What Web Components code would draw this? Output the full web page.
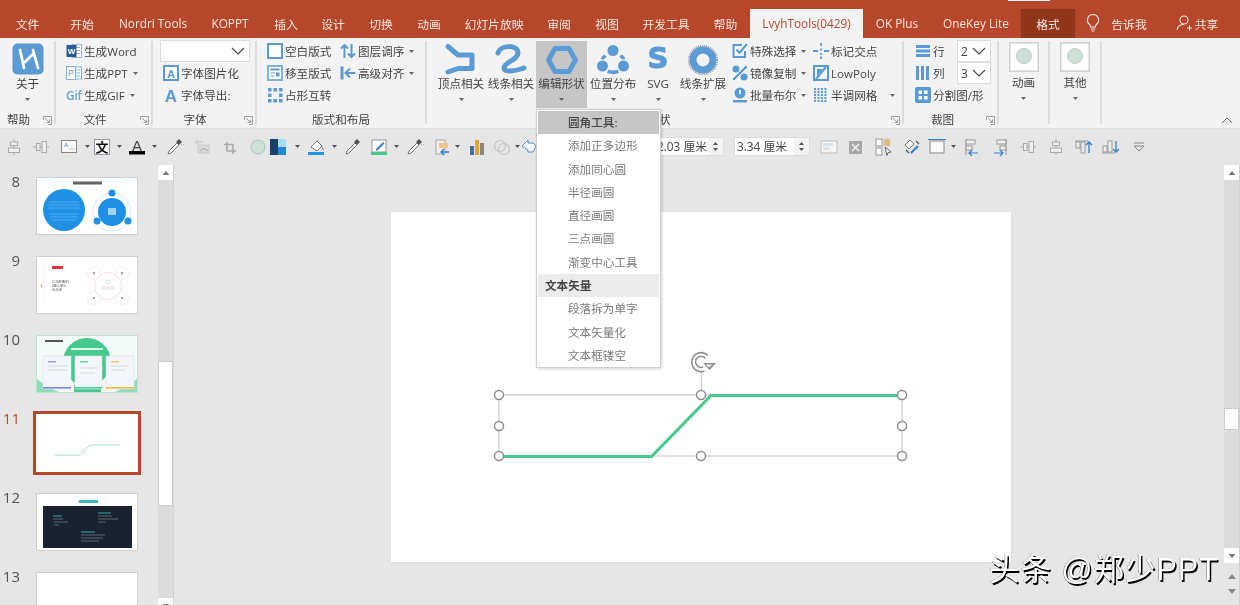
<!DOCTYPE html>
<html lang="zh"><head><meta charset="utf-8"><title>PPT</title>
<style>
html,body{margin:0;padding:0;background:#e6e6e6;overflow:hidden}
body{width:1240px;height:605px;font:11.6px "Open Sans","Noto Sans CJK SC",sans-serif;color:#444}
svg{display:block;overflow:visible}
ppt-thumb svg{overflow:hidden;filter:blur(.35px)}
</style></head><body>
<ppt-app>
<ppt-tabs>
<ppt-tab w="55">文件</ppt-tab><ppt-tab w="54">开始</ppt-tab><ppt-tab w="88">Nordri Tools</ppt-tab><ppt-tab w="66">KOPPT</ppt-tab><ppt-tab w="46">插入</ppt-tab><ppt-tab w="48">设计</ppt-tab><ppt-tab w="48">切换</ppt-tab><ppt-tab w="48">动画</ppt-tab><ppt-tab w="82">幻灯片放映</ppt-tab><ppt-tab w="48">审阅</ppt-tab><ppt-tab w="48">视图</ppt-tab><ppt-tab w="70">开发工具</ppt-tab><ppt-tab w="49">帮助</ppt-tab><ppt-tab w="113" state="active">LvyhTools(0429)</ppt-tab><ppt-tab w="68">OK Plus</ppt-tab><ppt-tab w="90">OneKey Lite</ppt-tab><ppt-tab w="54" state="dark">格式</ppt-tab>
<ppt-tab w="35"><svg width="16" height="20" viewBox="0 0 16 20" fill="none" stroke="#f7e6e1" stroke-width="1.2"><path d="M8 1.5a5.6 5.6 0 0 0-3.4 10c.8.7 1 1.500 1 2.500h4.800c0-1 .2-1.800 1-2.500A5.600 5.600 0 0 0 8 1.500zM5.800 16h4.400M6.500 18h3"/></svg></ppt-tab>
<ppt-tab w="38">告诉我</ppt-tab><ppt-tab w="24"></ppt-tab>
<ppt-tab w="50"><svg width="16" height="18" viewBox="0 0 16 18" fill="none" stroke="#f7e6e1" stroke-width="1.100" style="margin-right:3px"><circle cx="8" cy="6" r="4"/><path d="M1 16c.5-3.500 3-5.500 7-5.500M11 14h5M13.500 11.500v5"/></svg>共享</ppt-tab>
</ppt-tabs>

<ppt-ribbon>
<ppt-group w="56" lp="17" label="帮助" launch>
 <ppt-big w="55" label="关于"><svg width="32" height="32" viewBox="0 0 32 32" style="margin-top:-1px"><rect x="0.500" y="0.500" width="31" height="31" rx="5" fill="#5b9bd5"/><path d="M8 7l4 18M13 19l7-7M21 7l5 18" fill="none" stroke="#fff" stroke-width="2.800" stroke-linecap="round" stroke-linejoin="round"/></svg></ppt-big>
</ppt-group>
<ppt-group w="97" lp="17" label="文件" launch pad="10">
 <ppt-col>
 <ppt-row><svg slot="icon" width="16" height="16" viewBox="0 0 16 16"><rect x="6" y="1.500" width="9.500" height="13" fill="#fff" stroke="#9db3d8"/><path d="M9 4.500h5M9 7.500h5M9 10.500h5" stroke="#9db3d8"/><rect x="0.500" y="2" width="10" height="12" fill="#2b579a"/><text x="5.500" y="11" font-size="8" font-weight="700" text-anchor="middle" fill="#fff" font-family="Liberation Sans">W</text></svg>生成Word</ppt-row>
 <ppt-row arrow><svg slot="icon" width="16" height="16" viewBox="0 0 16 16" fill="none" stroke="#7fb3e0"><rect x="7" y="2" width="8.500" height="12" fill="#fff"/><path d="M10 5h4M10 8h4M10 11h4"/><rect x="0.500" y="1.500" width="9" height="13" fill="#fff"/><text x="5" y="11" font-size="8.500" fill="#5b9bd5" stroke="none" text-anchor="middle" font-family="Liberation Sans">P</text></svg>生成PPT</ppt-row>
 <ppt-row arrow><span slot="icon" style="color:#6aa5da;font-size:12px;font-weight:600;letter-spacing:-.3px;margin-left:0">Gif</span>生成GIF</ppt-row>
 </ppt-col>
</ppt-group>
<ppt-group w="104" lp="18" label="字体" launch pad="7">
 <ppt-col>
 <ppt-combo w="90"></ppt-combo>
 <ppt-row style="margin-left:3px"><svg slot="icon" width="16" height="16" viewBox="0 0 16 16"><rect x="1" y="1" width="14" height="14" fill="#fff" stroke="#5b9bd5" stroke-width="2"/><text x="8" y="12.500" font-size="11" font-weight="700" text-anchor="middle" fill="#5b9bd5" font-family="Liberation Sans">A</text></svg>字体图片化</ppt-row>
 <ppt-row style="margin-left:3px"><svg slot="icon" width="16" height="16" viewBox="0 0 16 16"><text x="8" y="14.500" font-size="17" font-weight="700" text-anchor="middle" fill="#5b9bd5" font-family="Liberation Sans">A</text></svg>字体导出:</ppt-row>
 </ppt-col>
</ppt-group>
<ppt-group w="170" label="版式和布局" pad="10">
 <ppt-col style="width:73px">
 <ppt-row><svg slot="icon" width="16" height="16" viewBox="0 0 16 16"><rect x="1" y="1" width="14" height="14" fill="#fff" stroke="#5b9bd5" stroke-width="2"/></svg>空白版式</ppt-row>
 <ppt-row><svg slot="icon" width="16" height="16" viewBox="0 0 16 16"><rect x="1" y="1" width="14" height="14" fill="#fff" stroke="#7fb3e0" stroke-width="2"/><path d="M3.500 4.500h9" stroke="#5b9bd5" stroke-width="2"/><path d="M3.500 8h4M3.500 11h4" stroke="#5b9bd5"/><rect x="9" y="7.500" width="3.500" height="4" fill="#5b9bd5"/></svg>移至版式</ppt-row>
 <ppt-row><svg slot="icon" width="16" height="16" viewBox="0 0 16 16" fill="#5b9bd5"><rect x="1" y="1" width="3.500" height="3.500"/><rect x="6.500" y="1" width="3.500" height="3.500"/><rect x="12" y="1" width="3.500" height="3.500"/><rect x="1" y="6.500" width="3.500" height="3.500"/><rect x="12" y="6.500" width="3.500" height="3.500"/><rect x="1" y="12" width="3.500" height="3.500"/><rect x="6.500" y="12" width="3.500" height="3.500"/><rect x="12" y="12" width="3.500" height="3.500"/></svg>占形互转</ppt-row>
 </ppt-col>
 <ppt-col>
 <ppt-row arrow><svg slot="icon" width="16" height="16" viewBox="0 0 16 16" fill="none" stroke="#5b9bd5" stroke-width="2"><path d="M4.500 15V2M1 5.500l3.500-3.500L8 5.500M11.500 1v13M8 10.500l3.500 3.500 3.500-3.500"/></svg>图层调序</ppt-row>
 <ppt-row arrow><svg slot="icon" width="16" height="16" viewBox="0 0 16 16" fill="none" stroke="#5b9bd5" stroke-width="2"><path d="M2 1.500v13" stroke-width="3"/><path d="M15.500 8H6M10 3.500L5.500 8l4.500 4.500"/></svg>高级对齐</ppt-row>
 </ppt-col>
</ppt-group>
<ppt-group w="477" lp="11" label="形状" launch pad="9">
 <ppt-big w="50" label="顶点相关"><svg width="32" height="32" viewBox="0 0 32 32" fill="none" stroke="#5b9bd5" stroke-width="5" stroke-linecap="round" stroke-linejoin="round"><path d="M3 2.500l10 8.500h14v13.500H13L3 28"/></svg></ppt-big>
 <ppt-big w="50" label="线条相关"><svg width="32" height="32" viewBox="0 0 32 32" fill="none" stroke="#5b9bd5" stroke-width="5" stroke-linecap="round"><path d="M3 9C5 1 23 0 23 9 23 16 9 18 9 24 9 29 21 27 29 24"/></svg></ppt-big>
 <ppt-big w="51" label="编辑形状" on style="margin-left:0"><svg width="32" height="32" viewBox="0 0 32 32" fill="none" stroke="#5b9bd5" stroke-width="5" stroke-linejoin="round"><path d="M2.500 16L9 4.500h14L29.500 16 23 27.500H9z"/></svg></ppt-big>
 <ppt-big w="52" label="位置分布"><svg width="32" height="32" viewBox="0 0 32 32" fill="#5b9bd5"><circle cx="16" cy="6.500" r="5.500"/><circle cx="5.500" cy="22" r="5.500"/><circle cx="26.500" cy="22" r="5.500"/><path d="M7 10.500A14 14 0 0 0 3.500 15l3.500.6c.7-1 1.600-2 2.800-2.800zM25 10.500a14 14 0 0 1 3.500 4.500l-3.500.6c-.7-1-1.600-2-2.800-2.800zM10 29c3.800 1.500 8.200 1.500 12 0l-1.200-3.300c-2.800 1-6.800 1-9.600 0z"/></svg></ppt-big>
 <ppt-big w="38" label="SVG"><svg width="32" height="32" viewBox="0 0 32 32"><text x="16" y="24" font-size="29" font-weight="700" fill="#5b9bd5" text-anchor="middle" font-family="DejaVu Sans" stroke="#5b9bd5" stroke-width="1">S</text></svg></ppt-big>
 <ppt-big w="52" label="线条扩展"><svg width="32" height="32" viewBox="0 0 32 32" fill="none"><circle cx="16" cy="16" r="14.300" stroke="#8a8a8a" stroke-width="1.500" stroke-dasharray="1 1"/><circle cx="16" cy="16" r="10" stroke="#5b9bd5" stroke-width="7"/></svg></ppt-big>
 <ppt-col style="width:81px;margin-left:3px">
 <ppt-row arrow><svg slot="icon" width="16" height="16" viewBox="0 0 16 16" fill="none" stroke="#5b9bd5" stroke-width="2"><path d="M13 8v6H1.500V2H10"/><path d="M4.500 6.500l3 3.500L15 1"/></svg>特殊选择</ppt-row>
 <ppt-row arrow><svg slot="icon" width="16" height="16" viewBox="0 0 16 16" fill="#5b9bd5"><circle cx="4" cy="4" r="3.500"/><circle cx="12" cy="12" r="3.500"/><path d="M14 1l1 1L2 15l-1-1z" stroke="#5b9bd5"/></svg>镜像复制</ppt-row>
 <ppt-row arrow><svg slot="icon" width="16" height="16" viewBox="0 0 16 16" fill="#5b9bd5"><circle cx="8" cy="6" r="5.500"/><rect x="7.200" y="3" width="1.600" height="4" fill="#fff"/><path d="M1 13h14v2.500H1z"/></svg>批量布尔</ppt-row>
 </ppt-col>
 <ppt-col style="width:82px">
 <ppt-row><svg slot="icon" width="16" height="16" viewBox="0 0 16 16" stroke="#5b9bd5" stroke-width="1.800"><path d="M8 0v3M8 5.500v2M8 10v2M8 13.500v2.500M0 8h5M11 8h5"/></svg>标记交点</ppt-row>
 <ppt-row><svg slot="icon" width="16" height="16" viewBox="0 0 16 16" fill="none" stroke="#5b9bd5" stroke-width="2"><rect x="1" y="1" width="14" height="14"/><path d="M4 4h6L4 11z" fill="#5b9bd5" stroke="none"/><path d="M13 2L3 14"/></svg>LowPoly</ppt-row>
 <ppt-row arrow="far"><svg slot="icon" width="16" height="16" viewBox="0 0 16 16" stroke="#5b9bd5" stroke-width="2" stroke-dasharray="2 1"><path d="M2 1v14M5.500 1v14M9 1v14M12.500 1v14"/></svg>半调网格</ppt-row>
 </ppt-col>
</ppt-group>
<ppt-group w="95" lp="16" label="裁图" launch pad="11">
 <ppt-col style="width:76px">
 <ppt-row><svg slot="icon" width="16" height="16" viewBox="0 0 16 16" fill="#5b9bd5"><rect x="1" y="2" width="14" height="3"/><rect x="1" y="6.500" width="14" height="3"/><rect x="1" y="11" width="14" height="3"/></svg>行<ppt-combo slot="end" w="34" value="2"></ppt-combo></ppt-row>
 <ppt-row><svg slot="icon" width="16" height="16" viewBox="0 0 16 16" fill="#5b9bd5"><rect x="1" y="1" width="3" height="14"/><rect x="6" y="1" width="3" height="14"/><rect x="11" y="1" width="3" height="14"/></svg>列<ppt-combo slot="end" w="34" value="3"></ppt-combo></ppt-row>
 <ppt-row><svg slot="icon" width="16" height="16" viewBox="0 0 16 16"><rect width="16" height="16" rx="2" fill="#5b9bd5"/><rect x="3.500" y="3.500" width="3.500" height="3.500" fill="#fff"/><rect x="9" y="3.500" width="3.500" height="3.500" fill="#fff"/><rect x="3.500" y="9" width="3.500" height="3.500" fill="#fff"/><rect x="9" y="9" width="3.500" height="3.500" fill="#fff"/></svg><span style="white-space:nowrap">分割图/形</span></ppt-row>
 </ppt-col>
</ppt-group>
<ppt-group w="51"><ppt-big w="49" label="动画" tight><svg width="30" height="30" viewBox="0 0 30 30"><rect x="0.750" y="0.750" width="28.500" height="28.500" fill="#fff" stroke="#cfcfcf" stroke-width="1.500"/><circle cx="15" cy="14" r="7.500" fill="#cfe0d8" stroke="#b9d2c6"/></svg></ppt-big></ppt-group>
<ppt-group w="52"><ppt-big w="50" label="其他" tight><svg width="30" height="30" viewBox="0 0 30 30"><rect x="0.750" y="0.750" width="28.500" height="28.500" fill="#fff" stroke="#cfcfcf" stroke-width="1.500"/><circle cx="15" cy="14" r="7.500" fill="#cfe0d8" stroke="#b9d2c6"/></svg></ppt-big></ppt-group>
</ppt-ribbon>

<ppt-toolbar></ppt-toolbar>

<ppt-workspace>
 <ppt-thumbs slot="thumbs">
 <ppt-thumb num="8"><svg width="100" height="56" viewBox="1 1 100 56"><path d="M1 3h12l3 2h21M67 5h21l3-2h10" fill="none" stroke="#cfe6f8" stroke-width=".6"/><rect x="37" y="4.500" width="29" height="3" fill="#666"/><circle cx="28" cy="33" r="21" fill="#1e90e6"/><path d="M13 25h30M12 28h32M12 31h32M13 37h30M14 40h28M16 43h24" stroke="#6db9f0" stroke-width=".7"/><circle cx="76" cy="35" r="19" fill="none" stroke="#cfe6f8"/><circle cx="76" cy="35" r="14" fill="#1e90e6"/><rect x="72" y="31" width="8" height="7" fill="#9fd0f5"/><circle cx="76" cy="16" r="3.500" fill="#1e90e6"/><circle cx="61" cy="44" r="3.500" fill="#1e90e6"/><circle cx="92" cy="44" r="3.500" fill="#1e90e6"/></svg></ppt-thumb>
 <ppt-thumb num="9"><svg width="100" height="56" viewBox="1 1 100 56"><rect x="16" y="10" width="11" height="3" fill="#f0303a"/><rect x="5" y="28" width="1" height="3" fill="#f2827f"/><path d="M8 2v50" stroke="#f2f2f2" stroke-width=".5"/><text x="16" y="27" font-size="3.500" fill="#555" font-family="Liberation Sans">COMPANY</text><text x="16" y="31" font-size="3.500" fill="#555" font-family="Liberation Sans">VALUES</text><text x="16" y="35" font-size="3.500" fill="#555" font-family="Liberation Sans">SLIDE</text><circle cx="72" cy="30" r="13.500" fill="none" stroke="#fbdedb"/><circle cx="72" cy="26" r="2" fill="none" stroke="#bbb" stroke-width=".5"/><path d="M66 31h12M65 33h14" stroke="#ccc" stroke-width=".6"/><g fill="none" stroke="#eee" stroke-width=".8"><circle cx="58" cy="17" r="6.500"/><circle cx="86" cy="17" r="6.500"/><circle cx="58" cy="42" r="6.500"/><circle cx="86" cy="42" r="6.500"/></g><g fill="#aaa"><circle cx="58" cy="17" r="1.300"/><circle cx="86" cy="17" r="1.300"/><circle cx="58" cy="42" r="1.300"/><circle cx="86" cy="42" r="1.300"/></g></svg></ppt-thumb>
 <ppt-thumb num="10" green><svg width="100" height="56" viewBox="1 1 100 56"><rect x="1" y="1" width="100" height="56" fill="#f4faf8"/><path d="M1 44c8 6 14 10 22 13H1zM101 44c-8 6-14 10-22 13h22z" fill="#8fdcb8"/><circle cx="51" cy="27" r="24" fill="#45c98d"/><path d="M38 49c4 5 22 5 27 0v8H38z" fill="#45c98d"/><rect x="9" y="5" width="18" height="2" fill="#555"/><rect x="35" y="13" width="32" height="2" fill="#dff5ea"/><g fill="#f3f6fa" stroke="#dcdfe4" stroke-width=".6"><rect x="7" y="21" width="28" height="33"/><rect x="39" y="21" width="27" height="33"/><rect x="70" y="21" width="28" height="33"/></g><rect x="7" y="52" width="28" height="1.500" fill="#7d7fe0"/><rect x="39" y="52" width="27" height="1.500" fill="#45c98d"/><rect x="70" y="52" width="28" height="1.500" fill="#f7b733"/><rect x="12" y="26" width="8" height="1.500" fill="#9da0ec"/><rect x="44" y="26" width="8" height="1.500" fill="#6fd4a4"/><rect x="75" y="26" width="8" height="1.500" fill="#f7c868"/><path d="M11 31h20M11 35h21M44 33h18M44 38h15M75 31h18M75 35h14" stroke="#ccc" stroke-width=".7"/></svg></ppt-thumb>
 <ppt-thumb num="11" on><svg width="102" height="58" viewBox="0 0 102 58" fill="none"><path d="M19 41h25l10-10h30" stroke="#a5e4c7" stroke-width="1"/></svg></ppt-thumb>
 <ppt-thumb num="12"><svg width="100" height="56" viewBox="1 1 100 56"><rect x="43" y="7" width="19" height="3" fill="#3fb6bd"/><rect x="7" y="13" width="89" height="42" fill="#1a2230"/><path d="M17 26h10M18 29h14M18 32h5M62 23h14M62 26h20M62 29h8M45 42h24M45 45h22M45 48h18" stroke="#6c7884" stroke-width=".8"/><path d="M17 23h9M62 20h13M45 39h14" stroke="#33b5bd" stroke-width=".9"/></svg></ppt-thumb>
 <ppt-thumb num="13" style="height:58px"></ppt-thumb>
 </ppt-thumbs>
 <ppt-scroll slot="sb1" top="196" h="145" edge="18"></ppt-scroll>
 <ppt-slide slot="main"></ppt-slide>
 <ppt-scroll slot="sb2" top="243" h="22" edge="60" extra></ppt-scroll>
</ppt-workspace>

<ppt-menu>
 <ppt-mi kind="head">圆角工具:</ppt-mi>
 <ppt-mi>添加正多边形</ppt-mi><ppt-mi>添加同心圆</ppt-mi><ppt-mi>半径画圆</ppt-mi><ppt-mi>直径画圆</ppt-mi><ppt-mi>三点画圆</ppt-mi><ppt-mi>渐变中心工具</ppt-mi>
 <ppt-mi kind="section">文本矢量</ppt-mi>
 <ppt-mi>段落拆为单字</ppt-mi><ppt-mi>文本矢量化</ppt-mi><ppt-mi>文本框镂空</ppt-mi>
</ppt-menu>
<ppt-watermark>头条 @郑少PPT</ppt-watermark>
</ppt-app>

<script>
const FONT='"Open Sans","Noto Sans CJK SC",sans-serif';
function def(name,css,html,extra){
  customElements.define(name,class extends HTMLElement{
    constructor(){super();const r=this.attachShadow({mode:'open'});r.innerHTML='<style>'+css+'</style>'+html;}
    connectedCallback(){extra&&extra.call(this,this.shadowRoot);}
  });
}
const tri=(c='#666')=>`<svg width="5" height="3" viewBox="0 0 5 3" style="display:block"><path d="M0 0h5L2.500 3z" fill="${c}"/></svg>`;

def('ppt-app',`:host{display:block;position:relative;width:1240px;height:605px;overflow:hidden;font:11.6px ${FONT};color:#444;filter:blur(.3px)}
 .crop{position:absolute;left:1008px;top:0;width:42px;height:1px;background:#fff}`,`<slot></slot><div class="crop"></div>`);

def('ppt-tabs',`:host{display:flex;height:29px;padding-top:9px;background:#b7472a}`,`<slot></slot>`);
def('ppt-tab',`:host{display:flex;align-items:center;justify-content:center;flex:none;height:29px;color:#f7e6e1;white-space:nowrap;padding-bottom:1px;box-sizing:border-box;font-size:11.8px}
 :host([state=active]){background:#f3f3f3;color:#b7472a}
 :host([state=dark]){background:#8f3519}`,`<slot></slot>`,function(){this.style.width=this.getAttribute('w')+'px'});

def('ppt-ribbon',`:host{display:flex;height:83px;padding:3px 0 4px;background:#f3f3f3;position:relative}
 svg{position:absolute;left:1221px;top:79px}`,`<slot></slot><svg width="12" height="7" viewBox="0 0 12 7" fill="none" stroke="#666" stroke-width="1"><path d="M1 6l5-5 5 5"/></svg>`);

def('ppt-group',`:host{display:flex;flex-direction:column;flex:none;box-sizing:border-box;height:83px;border-right:2px solid #dcdcdc;position:relative}
 .c{display:flex;height:71px;flex:none}
 .l{height:14px;line-height:14px;margin-top:1px;text-align:center;white-space:nowrap;color:#444}
 .g{position:absolute;right:2px;bottom:-1px;display:none}`,
 `<div class="c"><slot></slot></div><div class="l"></div><svg class="g" width="9" height="9" viewBox="0 0 9 9" fill="none" stroke="#888" stroke-width=".8"><path d="M.5 4V.5H8.500V8.500H5"/><path d="M2 2l4.500 4.500M6.500 3.500v3H3.500"/></svg>`,
 function(r){this.style.width=this.getAttribute('w')+'px';
  r.querySelector('.l').textContent=this.getAttribute('label')||'';
  r.querySelector('.l').style.paddingRight=(this.getAttribute('lp')||0)+'px';
  r.querySelector('.c').style.paddingLeft=(this.getAttribute('pad')||0)+'px';
  if(this.hasAttribute('launch'))r.querySelector('.g').style.display='block';});

def('ppt-big',`:host{display:flex;flex-direction:column;align-items:center;flex:none;height:67px;box-sizing:border-box;padding-top:3px}
 :host([on]){background:#c6c6c6}
 :host([tight]){padding-top:1px}
 .i{height:31px;display:flex;align-items:flex-start;justify-content:center}
 .t{height:18px;line-height:18px;white-space:nowrap;color:#444}
 :host([tight]) .t{margin-top:1px}
 .a{height:12px;display:flex;align-items:center}`,
 `<div class="i"><slot></slot></div><div class="t"></div><div class="a">${tri()}</div>`,
 function(r){this.style.width=this.getAttribute('w')+'px';r.querySelector('.t').textContent=this.getAttribute('label');});

def('ppt-col',`:host{display:flex;flex-direction:column;flex:none;margin-top:-1px}`,`<slot></slot>`);
def('ppt-row',`:host{display:flex;align-items:center;height:22px;flex:none;white-space:nowrap;color:#444}
 .i{width:18px;flex:none;display:flex;align-items:center}
 .a{margin-left:5px;display:none}
 :host([arrow]) .a{display:block}
 :host([arrow=far]) .a{margin-left:13px}
 .e{margin-left:auto}
 ::slotted([slot=icon]){flex:none}`,
 `<div class="i"><slot name="icon"></slot></div><slot></slot><div class="a">${tri()}</div><div class="e"><slot name="end"></slot></div>`);
def('ppt-combo',`:host{display:flex;align-items:center;height:22px;flex:none;box-sizing:border-box;background:#fff;border:1px solid #dcdcdc;padding:0 4px 0 3px;color:#444}
 span{flex:1;font-size:12px}`,
 `<span></span><svg width="14" height="8" viewBox="0 0 14 8" fill="none" stroke="#444" stroke-width="1.100"><path d="M1 1l6 6 6-6"/></svg>`,
 function(r){this.style.width=this.getAttribute('w')+'px';r.querySelector('span').textContent=this.getAttribute('value')||'';});

/* toolbar */
const G='#aaa';
const T={
 alignV:`<g fill="none" stroke="${G}"><path d="M10 2v16"/><rect x="6.500" y="5" width="7" height="3.500" fill="#eee"/><rect x="4.500" y="11" width="11" height="4.500" fill="#eee"/></g>`,
 alignH:`<g fill="none" stroke="${G}"><path d="M2 10h16"/><rect x="5.500" y="6.500" width="3.500" height="7" fill="#eee"/><rect x="11" y="4.500" width="4.500" height="11" fill="#eee"/></g>`,
 box:`<rect x="1.500" y="3.500" width="15" height="12" fill="#f7f7f7" stroke="#888"/><text x="4" y="10" font-size="6" fill="#3a7fc8" font-family="Liberation Sans">A</text><path d="M9 12h6" stroke="#ccc"/>`,
 wen:`<rect x="1.500" y="2.500" width="15" height="15" fill="#fff" stroke="#99a"/><text x="9" y="15" font-size="13" font-weight="700" text-anchor="middle" fill="#111" font-family="Noto Sans CJK SC">文</text>`,
 afont:`<text x="9" y="13.500" font-size="15" text-anchor="middle" fill="#444" font-family="Liberation Sans">A</text><rect x="1" y="14" width="16" height="3.500" fill="#000"/>`,
 drop:`<path d="M3 17l1-3 8-8 2 2-8 8z" fill="#fff" stroke="#777"/><path d="M11 5l3-3 3 3-3 3z" fill="#555"/>`,
 img:`<path d="M2 5l4-3v2h5v2H6v2z" fill="#d4d4d4"/><rect x="6" y="8" width="11" height="8" fill="#d8d8d8" stroke="#ccc"/><path d="M8 14l3-3 2 2 1-1 2 2" stroke="#aaa" fill="none"/>`,
 crop:`<path d="M7 5v9h9M4 7.500h9V17" fill="none" stroke="#aaa" stroke-width="1.600"/>`,
 circ:`<circle cx="10" cy="10" r="7" fill="#cfe0d8" stroke="#a9c6b9"/>`,
 color:`<rect x="2" y="2" width="8" height="16" fill="#17406d"/><rect x="10" y="2" width="8" height="8" fill="#a8dcf5"/><rect x="10" y="10" width="8" height="8" fill="#1e8ad2"/>`,
 bucket:`<path d="M4 10l6-6 5 5-5 5z" fill="#fff" stroke="#777"/><path d="M15 9c1 2 2 3 1.500 4S15 13 15 9z" fill="#888"/><rect x="1" y="15" width="16" height="3" fill="#1e96e8"/>`,
 pen:`<rect x="2" y="3" width="14" height="12" fill="#fff" stroke="#999"/><path d="M6 12l7-7 1.500 1.500-7 7H6z" fill="#3a7fc8"/><rect x="1" y="15" width="16" height="3" fill="#45c98d"/>`,
 paste:`<rect x="3" y="3" width="9" height="14" fill="#eee" stroke="#aaa"/><rect x="6" y="6" width="9" height="5" fill="#f3c78a"/><path d="M16 15H8M11 12l-3 3 3 3" stroke="#2f7fcf" fill="none" stroke-width="1.300"/>`,
 bars:`<rect x="3" y="9" width="4" height="9" fill="#3f6fa8"/><rect x="8" y="3" width="4" height="15" fill="#e9a23b"/><rect x="13" y="6" width="4" height="12" fill="#888"/>`,
 rings:`<g fill="none" stroke="#c4c4c4" stroke-width="1.200"><circle cx="8" cy="9" r="5.500"/><circle cx="12" cy="12" r="5.500"/></g>`,
 arrow:`<path d="M2 9l6-6v3h5l3 3-3 6H8v-2z" fill="#fff" stroke="#4b8fd3"/>`,
 note:`<rect x="2" y="4" width="16" height="12" fill="#f6f6f6" stroke="#bbb"/><rect x="4" y="6" width="10" height="3" fill="#d5e3f1"/><rect x="4" y="10" width="7" height="3" fill="#e4e4e4"/>`,
 xbox:`<rect x="3" y="4" width="13" height="13" fill="#a8a8a8"/><path d="M6 7l7 7M13 7l-7 7" stroke="#eee" stroke-width="1.600"/>`,
 sel:`<rect x="2" y="2" width="6" height="7" fill="#fff" stroke="#999"/><rect x="10" y="2" width="6" height="7" fill="#e9b765" stroke="#ccc"/><rect x="2" y="11" width="6" height="7" fill="#fff" stroke="#999"/><path d="M11 10l6 5-3 .5-1 3z" fill="#fff" stroke="#666"/>`,
 brush:`<path d="M3 8l5-5 4 4-5 5z" fill="#fff" stroke="#777"/><path d="M9 16l7-7" stroke="#2f7fcf" stroke-width="2"/><path d="M14 4l3 3M4 13l3 3" stroke="#555" stroke-width="1.300"/>`,
 frame:`<rect x="3" y="4" width="14" height="12" fill="#f8f8f8" stroke="#888"/><path d="M1 2.500h18" stroke="#3a7fc8"/>`,
 alignL:`<path d="M4 2v16" stroke="#999"/><rect x="4" y="3" width="9" height="4" fill="#eee" stroke="#999"/><rect x="4" y="9" width="6" height="4" fill="#eee" stroke="#999"/><path d="M16 16H7M10 13l-3 3 3 3" fill="none" stroke="#2f7fcf" stroke-width="1.200"/>`,
 alignR:`<path d="M16 2v16" stroke="#999"/><rect x="7" y="3" width="9" height="4" fill="#eee" stroke="#999"/><rect x="10" y="9" width="6" height="4" fill="#eee" stroke="#999"/><path d="M4 16h9M10 13l3 3-3 3" fill="none" stroke="#2f7fcf" stroke-width="1.200"/>`,
 alU:`<rect x="2" y="5" width="4" height="6" fill="#eee" stroke="#999"/><rect x="7" y="5" width="4" height="11" fill="#eee" stroke="#999"/><path d="M15 16V5M12 8l3-3 3 3" fill="none" stroke="#2f7fcf" stroke-width="1.300"/><path d="M1 4h13" stroke="#999"/>`,
 alD:`<rect x="2" y="9" width="4" height="6" fill="#eee" stroke="#999"/><rect x="7" y="4" width="4" height="11" fill="#eee" stroke="#999"/><path d="M15 4v11M12 12l3 3 3-3" fill="none" stroke="#2f7fcf" stroke-width="1.300"/><path d="M1 16h13" stroke="#999"/>`,
 more:`<path d="M5 6h10" stroke="#888"/><path d="M5 9h10l-5 5z" fill="none" stroke="#888"/>`
};
const items=[[14,0,'alignV'],[41,0,'alignH'],[70,87,'box'],[103,119,'wen'],[138,154,'afont'],[175,0,'drop'],[202,0,'img'],[230,0,'crop'],[258,0,'circ'],[278,297,'color'],[317,334,'bucket'],[353,0,'drop'],[380,396,'pen'],[415,0,'drop'],[443,457,'paste'],[477,0,'bars'],[502,517,'rings'],[530,0,'arrow'],
 ['in',654,70,'2.03 厘米'],['in',734,76,'3.34 厘米'],
 [829,0,'note'],[856,0,'xbox'],[884,0,'sel'],[912,0,'brush'],[937,953,'frame'],[972,0,'alignL'],[1000,0,'alignR'],[1028,0,'alignH'],[1056,0,'alignV'],[1084,0,'alU'],[1111,0,'alD'],[1139,0,'more']];
def('ppt-toolbar',`:host{display:flex;align-items:center;height:37px;padding-bottom:1px;background:#e6e6e6;border-top:1px solid #dedede;box-sizing:border-box}
 .t{flex:none;width:20px;height:20px}.a{flex:none}`,``,function(r){
  if(r.querySelector('.t'))return; let x=0,h='';
  for(const it of items){
   if(it[0]==='in'){h+=`<ppt-input style="margin-left:${it[1]-x}px;width:${it[2]}px" value="${it[3]}"></ppt-input>`;x=it[1]+it[2];continue;}
   const [c,a,k]=it,l=c-10;
   h+=`<svg class="t" viewBox="0 0 20 20" style="margin-left:${l-x}px">${T[k]}</svg>`;x=l+20;
   if(a){h+=`<div class="a" style="margin-left:${a-2.5-x}px">${tri('#555')}</div>`;x=a+2.5;}
  }
  r.innerHTML+=h;});
def('ppt-input',`:host{display:flex;flex:none;height:19px;box-sizing:border-box;background:#fff;border:1px solid #dcdcdc;color:#444;font-size:11.8px;line-height:17px}
 .v{flex:1;padding-left:2px;white-space:nowrap;overflow:hidden}
 .s{width:15px;flex:none;background:#f3f3f3;display:flex;flex-direction:column;align-items:center;justify-content:space-evenly}
 .u{transform:rotate(180deg)}`,`<div class="v"></div><div class="s"><div class="u">${tri('#555')}</div><div>${tri('#555')}</div></div>`,
 function(r){r.querySelector('.v').textContent=this.getAttribute('value');});

def('ppt-workspace',`:host{display:grid;grid-template-columns:158px 16px 1fr 16px;height:440px;background:#e6e6e6}`,
 `<slot name="thumbs"></slot><slot name="sb1"></slot><slot name="main"></slot><slot name="sb2"></slot>`);
def('ppt-thumbs',`:host{display:flex;flex-direction:column;gap:21px;padding-top:12px;overflow:hidden;height:428px}`,`<slot></slot>`);
def('ppt-thumb',`:host{display:flex;flex:none;height:58px;align-items:flex-start}
 .n{width:20px;text-align:right;font-size:15px;line-height:16px;margin-top:-4px;color:#555;flex:none}
 :host([on]) .n{color:#c4492a}
 .b{margin-left:16px;width:102px;height:58px;box-sizing:border-box;border:1px solid #cfcfcf;background:#fff;flex:none;overflow:hidden}
 :host([green]) .b{border-color:#bfe3d2}
 :host([on]) .b{border:0;outline:3px solid #b7472a}`,
 `<div class="n"></div><div class="b"><slot></slot></div>`,function(r){r.querySelector('.n').textContent=this.getAttribute('num');});
const a8=(c,h)=>tri(c).replace('width="5" height="3"',`width="8" height="${h}"`);
def('ppt-scroll',`:host{display:flex;flex-direction:column;position:relative;background:#dcdcdc;height:440px;width:16px;box-sizing:border-box;border-right:1px solid #d2d2d2}
 .b{height:15px;background:#fff;display:flex;align-items:center;justify-content:center;flex:none}
 .u{transform:rotate(180deg)}
 .th{position:absolute;left:0;width:15px;background:#fff;border:1px solid #ccc;box-sizing:border-box}
 .sp{flex:1}
 .x{height:42px;background:#e6e6e6;display:none;flex-direction:column;align-items:center;justify-content:space-evenly}
 :host([extra]) .x{display:flex}`,
 `<div class="b"><div class="u">${a8('#777',4)}</div></div><div class="sp"></div><div class="th"></div><div class="b e">${a8('#777',4)}</div><div class="x"><div class="u">${a8('#888',5)}</div><div>${a8('#888',5)}</div></div>`,
 function(r){const t=r.querySelector('.th');t.style.top=this.getAttribute('top')+'px';t.style.height=this.getAttribute('h')+'px';
  r.querySelector('.b.e').style.marginBottom=this.hasAttribute('extra')?'0':'-8px';});

def('ppt-slide',`:host{display:block;padding:47px 0 0 217px}
 .s{width:620px;height:350px;background:#fff;box-shadow:0 0 0 1px #e0e0e0;position:relative}`,
 `<div class="s"><svg width="620" height="350" viewBox="391 212 620 350" fill="none" style="display:block">
  <rect x="499" y="395" width="403" height="61" stroke="#c9c9c9" stroke-width="1.200"/>
  <path d="M701.500 372v23" stroke="#c9c9c9" stroke-width="1.200"/>
  <path d="M499 456.500h152.500L711 395.500h191" stroke="#45c98d" stroke-width="3"/>
  <g fill="#fff" stroke="#8f8f8f" stroke-width="1.500">
   <circle cx="499" cy="395" r="4.500"/><circle cx="701" cy="395" r="4.500"/><circle cx="902" cy="395" r="4.500"/>
   <circle cx="499" cy="426" r="4.500"/><circle cx="902" cy="426" r="4.500"/>
   <circle cx="499" cy="456" r="4.500"/><circle cx="701" cy="456" r="4.500"/><circle cx="902" cy="456" r="4.500"/>
  </g>
  <g stroke="#8f8f8f" stroke-width="1.600"><path d="M708 355.500A9.500 9.500 0 1 0 704.500 371"/><path d="M705.500 358.500A5.500 5.500 0 1 0 703 367"/><path d="M703 363h13l-6.500 7z" fill="#8f8f8f" stroke="none"/><path d="M706 364.500h6l-3 3z" fill="#fff" stroke="none"/></g>
 </svg></div>`);

def('ppt-menu',`:host{position:absolute;left:536px;top:109px;width:125px;height:259px;box-sizing:border-box;background:#fff;border:1px solid #cfcfcf;box-shadow:1px 1px 3px rgba(0,0,0,.18);padding:1px 1px 0;display:flex;flex-direction:column}`,`<slot></slot>`);
def('ppt-mi',`:host{display:block;height:23.300px;line-height:23.300px;padding-left:30px;color:#7a7a7a;flex:none;white-space:nowrap}
 :host([kind=head]){background:#c6c6c6;color:#444;font-weight:500}
 :host([kind=section]){background:#ebebeb;color:#444;font-weight:700;padding-left:7px}`,`<slot></slot>`);
def('ppt-watermark',`:host{position:absolute;left:989px;top:551px;font:30.5px/36px "Liberation Sans","Noto Sans CJK SC",sans-serif;letter-spacing:1px;color:#fff;text-shadow:1.500px 1.500px 0 #000,-.5px -.5px 0 #777;white-space:nowrap}`,`<slot></slot>`);
</script>
</body></html>
